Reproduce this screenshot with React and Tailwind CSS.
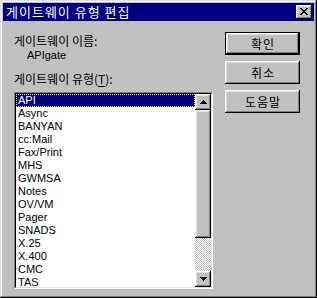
import React from "react";

const bevel =
  "shadow-[inset_-1px_-1px_#000000,inset_1px_1px_#ffffff,inset_-2px_-2px_#808080,inset_2px_2px_#dfdfdf]";

const items = [
  "API",
  "Async",
  "BANYAN",
  "cc:Mail",
  "Fax/Print",
  "MHS",
  "GWMSA",
  "Notes",
  "OV/VM",
  "Pager",
  "SNADS",
  "X.25",
  "X.400",
  "CMC",
  "TAS",
];

const ko = { fontFamily: '"Noto Sans CJK KR", "Noto Sans", sans-serif' };
const latin = { fontFamily: '"Liberation Sans", Arial, sans-serif' };

function Arrow({ down }) {
  return (
    <svg width="7" height="4" viewBox="0 0 7 4" className="block">
      {down ? (
        <path d="M0 0h7v1H6v1H5v1H4v1H3V3H2V2H1V1H0z" fill="#000" />
      ) : (
        <path d="M3 0h1v1h1v1h1v1h1v1H0V3h1V2h1V1h1z" fill="#000" />
      )}
    </svg>
  );
}

function Button({ label, isDefault }) {
  const inner = (
    <div
      className={`flex h-full w-full items-center justify-center bg-[#c0c0c0] pl-px text-[12px] tracking-[1px] text-black ${bevel}`}
      style={ko}
    >
      {label}
    </div>
  );
  if (isDefault) {
    return <div className="h-[23px] w-[75px] border border-black">{inner}</div>;
  }
  return <div className="h-[23px] w-[75px]">{inner}</div>;
}

export default function App() {
  return (
    <div
      className={`flex h-[298px] w-[317px] flex-col bg-[#c0c0c0] p-[3px] shadow-[inset_-1px_-1px_#000000,inset_1px_1px_#dfdfdf,inset_-2px_-2px_#808080,inset_2px_2px_#ffffff]`}
    >
      {/* title bar */}
      <div className="flex h-[18px] items-center justify-between bg-[#000080] pl-[3px] pr-[2px]">
        <span className="text-[13px] leading-[18px] tracking-[1px] text-white" style={ko}>
          게이트웨이 유형 편집
        </span>
        <div className={`flex h-[14px] w-[16px] items-center justify-center bg-[#c0c0c0] ${bevel}`}>
          <svg width="8" height="7" viewBox="0 0 8 7" className="block -mt-px">
            <path
              d="M0 0h2v1h1v1h2V1h1V0h2v1H7v1H6v1H5v1h1v1h1v1h1v1H6V6H5V5H3v1H2v1H0V6h1V5h1V4h1V3H2V2H1V1H0z"
              fill="#000"
            />
          </svg>
        </div>
      </div>

      {/* body */}
      <div className="flex flex-1">
        <div className="flex flex-col pl-[11px] pt-[13px]">
          <div className="text-[12px] leading-[14px] text-black" style={ko}>
            게이트웨이 이름:
          </div>
          <div className="mt-px pl-[13px] text-[11px] leading-[13px] text-black" style={latin}>
            APIgate
          </div>
          <div className="mt-[10px] text-[12px] leading-[14px] text-black" style={ko}>
            게이트웨이 유형(<span className="underline underline-offset-2">T</span>):
          </div>

          {/* listbox */}
          <div className="mt-[6px] h-[197px] w-[199px] border-b border-l border-r border-t border-b-white border-l-[#808080] border-r-white border-t-[#808080]">
            <div className="flex h-full w-full border-b border-l border-r border-t border-b-[#dfdfdf] border-l-black border-r-[#dfdfdf] border-t-black bg-white">
              <div className="flex-1 overflow-hidden" style={latin}>
                {items.map((it, i) => (
                  <div
                    key={it}
                    className={`h-[13px] pl-[2px] text-[11px] leading-[13px] whitespace-nowrap ${
                      i === 0
                        ? "bg-[#000080] text-white outline-1 outline-dotted outline-[#ffff00] -outline-offset-1"
                        : "text-black"
                    }`}
                  >
                    {it}
                  </div>
                ))}
              </div>

              {/* scrollbar */}
              <div className="flex w-[16px] flex-col">
                <div className={`flex h-[16px] items-center justify-center bg-[#c0c0c0] ${bevel}`}>
                  <Arrow />
                </div>
                <div className={`h-[128px] bg-[#c0c0c0] ${bevel}`} />
                <div className="flex-1 bg-[conic-gradient(#c0c0c0_25%,#ffffff_0_50%,#c0c0c0_0_75%,#ffffff_0)] bg-[length:2px_2px]" />
                <div className={`flex h-[16px] items-center justify-center bg-[#c0c0c0] ${bevel}`}>
                  <Arrow down />
                </div>
              </div>
            </div>
          </div>
        </div>

        <div className="ml-auto flex flex-col gap-[6px] pr-[14px] pt-[11px]">
          <Button label="확인" isDefault />
          <Button label="취소" />
          <Button label="도움말" />
        </div>
      </div>
    </div>
  );
}
